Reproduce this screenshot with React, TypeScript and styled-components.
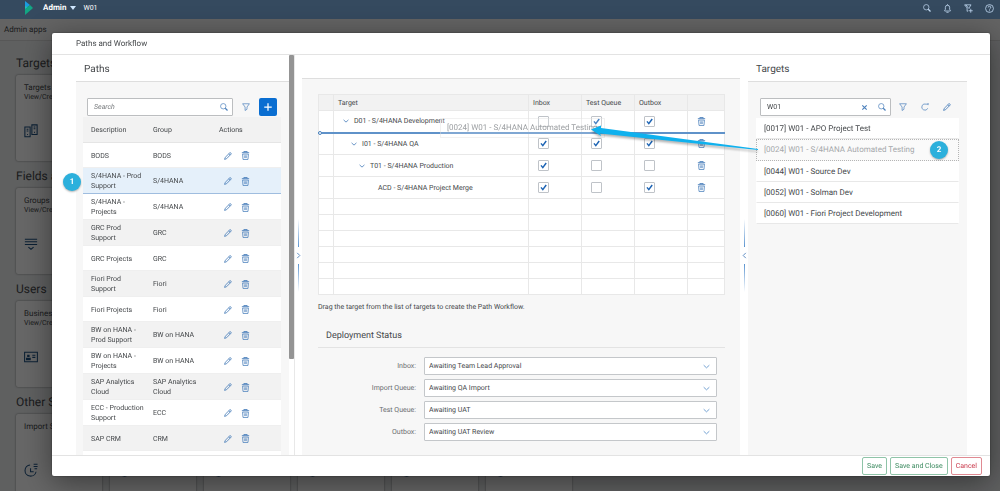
import React from 'react';
import styled, { createGlobalStyle, css } from 'styled-components';

const paths = [
  { description: 'BODS', group: 'BODS' },
  { description: 'S/4HANA - Prod Support', group: 'S/4HANA', selected: true },
  { description: 'S/4HANA - Projects', group: 'S/4HANA' },
  { description: 'GRC Prod Support', group: 'GRC' },
  { description: 'GRC Projects', group: 'GRC' },
  { description: 'Fiori Prod Support', group: 'Fiori' },
  { description: 'Fiori Projects', group: 'Fiori' },
  { description: 'BW on HANA - Prod Support', group: 'BW on HANA' },
  { description: 'BW on HANA - Projects', group: 'BW on HANA' },
  { description: 'SAP Analytics Cloud', group: 'SAP Analytics Cloud' },
  { description: 'ECC - Production Support', group: 'ECC' },
  { description: 'SAP CRM', group: 'CRM' },
];

const workflow = [
  { name: 'D01 - S/4HANA Development', level: 0, checks: [false, true, true], drop: true },
  { name: 'I01 - S/4HANA QA', level: 1, checks: [true, true, true] },
  { name: 'T01 - S/4HANA Production', level: 2, checks: [true, false, false] },
  { name: 'ACD - S/4HANA Project Merge', level: 3, checks: [true, false, true], leaf: true },
];

const queues = ['Inbox', 'Test Queue', 'Outbox'];

const statuses = [
  { id: 'inbox', label: 'Inbox:', value: 'Awaiting Team Lead Approval' },
  { id: 'import', label: 'Import Queue:', value: 'Awaiting QA Import' },
  { id: 'test', label: 'Test Queue:', value: 'Awaiting UAT' },
  { id: 'outbox', label: 'Outbox:', value: 'Awaiting UAT Review' },
];

const targets = [
  '[0017] W01 - APO Project Test',
  '[0024] W01 - S/4HANA Automated Testing',
  '[0044] W01 - Source Dev',
  '[0052] W01 - Solman Dev',
  '[0060] W01 - Fiori Project Development',
];

const sections = [
  { title: 'Targets', tile: 'Targets', sub: 'View/Create', icon: 'systems', count: 1 },
  { title: 'Fields and Groups', tile: 'Groups', sub: 'View/Create', icon: 'groups', count: 1 },
  { title: 'Users', tile: 'Business', sub: 'View/Create', icon: 'card', count: 1 },
  { title: 'Other Settings', tile: 'Import Status', sub: '', icon: 'clock', count: 6 },
];

/* ---------- icons ---------- */

const Icon = ({ name, size = 8 }: { name: string; size?: number }) => (
  <svg width={size} height={size} viewBox="0 0 16 16" fill="none" stroke="currentColor" strokeWidth="1.4" aria-hidden="true">
    {name === 'search' && <><circle cx="6.5" cy="6.5" r="5.4" /><path d="M10.5 10.5 15 15" strokeWidth="2.4" /></>}
    {name === 'filter' && <path d="M1.2 1.5h13.6L10 8v4.5L6.2 15V8z" />}
    {name === 'filterAdd' && <><path d="M9 8.5V7l3.5-5.5H1L5.5 7v6l2-1M3.5 1.5 8 7.5" /><path d="M12 8.5v7M8.5 12h7" /></>}
    {name === 'plus' && <path d="M8 2v12M2 8h12" strokeWidth="2" />}
    {name === 'close' && <path d="M3 3l10 10M13 3 3 13" strokeWidth="2.6" />}
    {name === 'refresh' && <path d="M13.5 10.5A6.2 6.2 0 1 1 10 2.3h4.2M14.2 0v4.2" />}
    {name === 'pencil' && <path d="M1.2 14.8l1.2-4L11.6 1.6q1.2-.8 2.2.4t.4 2.2L5.2 13.4zM9.8 3.4l2.8 2.8" strokeWidth="1.7" />}
    {name === 'trash' && (
      <>
        <path d="M1.500 3h13M5 2.600V1h6v1.600" strokeWidth="1.6" />
        <path d="M2.800 5.500l.8 9.500h8.800l.8-9.500z" />
        <path d="M6 7.500l.3 5M8 7.500v5M10 7.500l-.3 5" strokeWidth="1" />
      </>
    )}
    {name === 'down' && <path d="M1.500 5 8 11l6.500-6" strokeWidth="2.2" />}
    {name === 'right' && <path d="M5 2l6 6-6 6" strokeWidth="2" />}
    {name === 'left' && <path d="M11 2 5 8l6 6" strokeWidth="2" />}
    {name === 'bell' && <path d="M3 12.5V11l1.2-1.5V6a3.8 3.8 0 0 1 7.6 0v3.5L13 11v1.5zM8 2.2V.5M6 14.8h4" />}
    {name === 'help' && <><circle cx="8" cy="8" r="7" /><path d="M5.7 6.2a2.3 2.3 0 1 1 3.3 2c-.8.4-1 .8-1 1.6M8 11.3V13" /></>}
    {name === 'systems' && <><path d="M1 3.5h6v11H1zM9 1h6v11H9zM3 6h2M11 3.5h2M3 8h2M11 5.5h2" strokeWidth="1.2" /><path d="M3.5 12h1M11.5 9.5h1" /></>}
    {name === 'groups' && <path d="M1 2.5h14M1 5.5h14M1 8.5h14M5 11.5l3 2.5 3-2.5" strokeWidth="1.2" />}
    {name === 'card' && <><path d="M.7 2.5h14.6v11H.7z" strokeWidth="1.2" /><path d="M3 11V9.5h4V11zM4.3 6h1.4v1.4H4.3zM9.5 6H13M9.5 8.5H13" strokeWidth="1.4" /></>}
    {name === 'clock' && <path d="M7 2.2A6.4 6.4 0 1 0 13.8 10M7.5 6v4H11M11 1.5h4.5M11 4h4.5M12 6.5h3" strokeWidth="1.2" />}
  </svg>
);

const Logo = () => (
  <svg width="8" height="14" viewBox="0 0 8 14" aria-hidden="true">
    <path d="M0 0l5 4-5 4z" fill="#1c9be0" />
    <path d="M0 8l5-4 3 3-8 7z" fill="#12a583" />
    <path d="M0 5l2.500 1L0 8z" fill="#1fc6b6" />
  </svg>
);

const CheckBox = ({ label, checked }: { label: string; checked: boolean }) => (
  <CheckWrap>
    <CheckInput type="checkbox" aria-label={label} defaultChecked={checked} />
    <svg width="11" height="11" viewBox="0 0 11 11" fill="none" stroke="#1d64b4" strokeWidth="1.5">
      <path d="M3 5.4 4.800 7.600 8.200 3" />
    </svg>
  </CheckWrap>
);

const Splitter = ({ icon }: { icon: string }) => (
  <SplitBar>
    <SplitLine $up />
    <Icon name={icon} size={7} />
    <SplitLine />
  </SplitBar>
);

const DragArrow = () => (
  <ArrowSvg width="172" height="32" viewBox="0 0 172 32" aria-hidden="true">
    <path d="M4 7.500 14 3.500v2.500L171 27v1L13 11.500l1 2.500z" fill="#0fb1ee" />
  </ArrowSvg>
);

/* ---------- page ---------- */

const App = () => {
  return (
    <Page>
      <GlobalStyle />
      <ShellBar>
        <Logo />
        <AppMenu type="button">Admin <Caret /></AppMenu>
        <span>W01</span>
        <ShellActions>
          <IconButton aria-label="Search"><Icon name="search" /></IconButton>
          <IconButton aria-label="Notifications"><Icon name="bell" size={9} /></IconButton>
          <IconButton aria-label="Add filter"><Icon name="filterAdd" size={9} /></IconButton>
          <IconButton aria-label="Help"><Icon name="help" size={9} /></IconButton>
        </ShellActions>
      </ShellBar>
      <SubBar>Admin apps</SubBar>
      <Launchpad>
        {sections.map((s) => (
          <section key={s.title}>
            <SectionTitle>{s.title}</SectionTitle>
            <Tiles>
              {Array.from({ length: s.count }, (_, i) => (
                <Tile key={i}>
                  {i === 0 && <TileTitle>{s.tile}</TileTitle>}
                  {i === 0 && <TileSub>{s.sub}</TileSub>}
                  <TileIcon><Icon name={s.icon} size={14} /></TileIcon>
                </Tile>
              ))}
            </Tiles>
          </section>
        ))}
      </Launchpad>
      <Backdrop />

      <Dialog role="dialog" aria-label="Paths and Workflow">
        <DialogHeader>Paths and Workflow</DialogHeader>
        <DialogBody>
          <PathsPane>
            <PaneTitle>Paths</PaneTitle>
            <PathsContent>
              <Toolbar>
                <SearchBox>
                  <SearchInput aria-label="Search paths" placeholder="Search" />
                  <IconButton aria-label="Search"><Icon name="search" /></IconButton>
                </SearchBox>
                <IconButton $wide aria-label="Filter"><Icon name="filter" /></IconButton>
                <AddButton aria-label="Add path"><Icon name="plus" size={10} /></AddButton>
              </Toolbar>
              <PathTable>
                <thead>
                  <tr><th>Description</th><th>Group</th><th>Actions</th></tr>
                </thead>
                <tbody>
                  {paths.map((p) => (
                    <PathRow key={p.description} $selected={p.selected}>
                      <td>{p.description}</td>
                      <td>{p.group}</td>
                      <td>
                        <RowActions>
                          <IconButton aria-label={`Edit ${p.description}`}><Icon name="pencil" /></IconButton>
                          <IconButton aria-label={`Delete ${p.description}`}><Icon name="trash" size={9} /></IconButton>
                        </RowActions>
                        {p.selected && <RowBadge>1</RowBadge>}
                      </td>
                    </PathRow>
                  ))}
                  <PathRow><td /><td /><td /></PathRow>
                </tbody>
              </PathTable>
            </PathsContent>
          </PathsPane>
          <ScrollTrack><ScrollThumb /></ScrollTrack>
          <Splitter icon="right" />

          <WorkflowPane>
            <PaneTitle />
            <WorkflowContent>
              <TableWrap>
                <WorkflowTable>
                  <colgroup>
                    <Col $w={15} /><col /><Col $w={53} /><Col $w={53} /><Col $w={53} /><Col $w={37} />
                  </colgroup>
                  <thead>
                    <tr>
                      <th /><th>Target</th>
                      {queues.map((q) => <th key={q}>{q}</th>)}
                      <th />
                    </tr>
                  </thead>
                  <tbody>
                    {workflow.map((w) => (
                      <WorkflowRow key={w.name} $drop={w.drop}>
                        <td />
                        <td>
                          <TreeNode $level={w.level} $leaf={w.leaf}>
                            {!w.leaf && <IconButton aria-label={`Collapse ${w.name}`}><Icon name="down" size={6} /></IconButton>}
                            <span>{w.name}</span>
                          </TreeNode>
                        </td>
                        {w.checks.map((c, i) => (
                          <td key={queues[i]}><CheckBox label={`${w.name} ${queues[i]}`} checked={c} /></td>
                        ))}
                        <td><IconButton aria-label={`Delete ${w.name}`}><Icon name="trash" size={9} /></IconButton></td>
                      </WorkflowRow>
                    ))}
                    {[0, 1, 2, 3, 4, 5].map((n) => (
                      <EmptyRow key={n}><td /><td /><td /><td /><td /><td /></EmptyRow>
                    ))}
                  </tbody>
                </WorkflowTable>
                <DropDot />
                <DragGhost>[0024] W01 - S/4HANA Automated Testing</DragGhost>
              </TableWrap>
              <Hint>Drag the target from the list of targets to create the Path Workflow.</Hint>
              <FormTitle>Deployment Status</FormTitle>
              <Form>
                {statuses.map((s) => (
                  <FormRow key={s.id}>
                    <label htmlFor={s.id}>{s.label}</label>
                    <SelectWrap>
                      <Select id={s.id} defaultValue={s.value}><option>{s.value}</option></Select>
                      <Icon name="down" size={7} />
                    </SelectWrap>
                  </FormRow>
                ))}
              </Form>
            </WorkflowContent>
          </WorkflowPane>
          <Splitter icon="left" />

          <TargetsPane>
            <PaneTitle>Targets</PaneTitle>
            <TargetsContent>
              <Toolbar>
                <SearchBox>
                  <SearchInput aria-label="Search targets" defaultValue="W01" />
                  <IconButton aria-label="Clear"><Icon name="close" size={7} /></IconButton>
                  <IconButton aria-label="Search"><Icon name="search" /></IconButton>
                </SearchBox>
                <TargetActions>
                  <IconButton aria-label="Filter"><Icon name="filter" /></IconButton>
                  <IconButton aria-label="Refresh"><Icon name="refresh" /></IconButton>
                  <IconButton aria-label="Edit"><Icon name="pencil" /></IconButton>
                </TargetActions>
              </Toolbar>
              <TargetList>
                {targets.map((t, i) => (
                  <TargetItem key={t} $dragging={i === 1}>
                    {t}
                    {i === 1 && <TargetBadge>2</TargetBadge>}
                    {i === 1 && <DragArrow />}
                  </TargetItem>
                ))}
              </TargetList>
            </TargetsContent>
          </TargetsPane>
        </DialogBody>
        <DialogFooter>
          <FooterButton>Save</FooterButton>
          <FooterButton>Save and Close</FooterButton>
          <FooterButton $danger>Cancel</FooterButton>
        </DialogFooter>
      </Dialog>
    </Page>
  );
};

export default App;

const GlobalStyle = createGlobalStyle`
* { box-sizing:border-box; }
body {
  margin:0;
  background:#edeff0;
  color:#45484b;
  font-family:Roboto, "Liberation Sans", sans-serif;
  font-size:7px;
  line-height:10px;
  text-rendering:geometricPrecision;
}
button, input, select { font:inherit; color:inherit; text-rendering:inherit; }
table { border-collapse:collapse; table-layout:fixed; }
th { font-weight:400; text-align:left; }
td, th { padding:0; }
`

const Page = styled.div`
height:100vh;
overflow:hidden;
display:flex;
flex-direction:column;
`

const ShellBar = styled.header`
flex:none;
height:19px;
padding:0 6px 3px 25px;
display:flex;
align-items:center;
background:#354a5f;
color:white;
position:relative;
z-index:2;
`

const AppMenu = styled.button`
border:none;
background:none;
padding:0;
margin:0 7px 0 10px;
display:flex;
align-items:center;
gap:4px;
font-size:8px;
font-weight:700;
cursor:pointer;
`

const Caret = styled.i`
border:3px solid transparent;
border-top:4px solid #d1e8ff;
border-bottom:none;
`

const IconButton = styled.button<{ $wide?: boolean }>`
border:none;
background:none;
padding:0;
width:${p => (p.$wide ? '26px' : '9px')};
flex:none;
display:flex;
align-items:center;
justify-content:center;
color:#4a7fbb;
cursor:pointer;
`

const ShellActions = styled.div`
margin-left:auto;
display:flex;
gap:12px;
${IconButton}{
  color:#c5ddf5;
}
`

const SubBar = styled.div`
flex:none;
height:22px;
padding:0 4px;
display:flex;
align-items:center;
font-size:8px;
background:#f7f7f7;
border-bottom:1px solid #d9d9d9;
`

const Launchpad = styled.main`
flex:1;
min-height:0;
padding:12px 16px 0;
overflow:hidden;
`

const SectionTitle = styled.h2`
margin:0;
height:22px;
line-height:20px;
font-size:12px;
font-weight:400;
`

const Tiles = styled.div`
display:flex;
gap:8px;
margin-bottom:5px;
`

const Tile = styled.div`
width:86px;
height:86px;
padding:8px 8px 5px;
display:flex;
flex-direction:column;
background:white;
border-radius:2px;
box-shadow:0 0 2px rgba(0, 0, 0, 0.5);
`

const TileTitle = styled.div`
font-size:8px;
line-height:10px;
`

const TileSub = styled.div`
line-height:8px;
`

const TileIcon = styled.div`
margin-top:auto;
height:32px;
color:#1d4f80;
`

const Backdrop = styled.div`
position:fixed;
inset:19px 0 0;
background:rgba(0, 0, 0, 0.6);
z-index:1;
`

const Dialog = styled.div`
position:fixed;
inset:33px 10px 15px 52px;
z-index:3;
display:flex;
flex-direction:column;
background:white;
border-radius:2px;
box-shadow:0 6px 30px rgba(0, 0, 0, 0.45), 0 0 2px rgba(0, 0, 0, 0.5);
`

const DialogHeader = styled.h1`
margin:0;
flex:none;
height:22px;
padding:0 24px;
display:flex;
align-items:center;
font-size:8px;
font-weight:400;
border-bottom:1px solid #e3e3e3;
`

const DialogBody = styled.div`
flex:1;
min-height:0;
display:flex;
padding:0 23px 0 24px;
`

const pane = css`
display:flex;
flex-direction:column;
background:#f7f7f7;
`

const PathsPane = styled.section`
${pane}
flex:none;
width:213px;
`

const WorkflowPane = styled.section`
${pane}
flex:1;
min-width:0;
> h2{
  height:24px;
}
`

const TargetsPane = styled.section`
${pane}
flex:none;
width:219px;
`

const PaneTitle = styled.h2`
margin:0;
flex:none;
height:27px;
padding:4px 8px 0;
display:flex;
align-items:center;
font-size:10px;
font-weight:400;
background:white;
border-bottom:1px solid #dedede;
`

/* open on the left so that the row badge can hang out */
const PathsContent = styled.div`
flex:1;
min-height:0;
padding:16px 8px 0 7px;
clip-path:inset(0 0 0 -30px);
`

const Toolbar = styled.div`
display:flex;
align-items:center;
padding:0 4px;
`

const SearchBox = styled.div`
flex:1;
min-width:0;
height:18px;
padding:0 4px 0 6px;
display:flex;
align-items:center;
gap:8px;
background:white;
border:1px solid #bcbec0;
border-radius:1px;
`

const SearchInput = styled.input`
flex:1;
min-width:0;
border:none;
padding:0;
background:none;
outline:none;
&::placeholder{
  color:#74777a;
  font-style:italic;
}
`

const AddButton = styled.button`
width:18px;
height:18px;
padding:0;
border:none;
border-radius:2px;
display:flex;
align-items:center;
justify-content:center;
background:#0a6ed1;
color:white;
cursor:pointer;
`

const PathTable = styled.table`
width:100%;
margin-top:1px;
th{
  height:26px;
  padding-left:8px;
  background:#f2f2f2;
  box-shadow:inset 0 -1px #e5e5e5;
}
td{
  height:25px;
  padding:3px 0 3px 8px;
}
th:nth-child(1){
  width:62px;
}
th:nth-child(2){
  width:66px;
}
`

const PathRow = styled.tr<{ $selected?: boolean }>`
position:relative;
background:white;
&:nth-child(even){
  background:${p => (p.$selected ? '#e5f0fa' : '#f2f2f2')};
}
td{
  box-shadow:inset 0 -1px ${p => (p.$selected ? '#9fbddf' : '#efefef')};
}
`

const RowActions = styled.div`
display:flex;
gap:9px;
padding-left:4px;
`

const Badge = styled.span`
position:absolute;
width:18px;
height:18px;
border-radius:50%;
display:flex;
align-items:center;
justify-content:center;
background:#2cb0dc;
color:white;
font-size:8px;
font-weight:700;
box-shadow:0 1px 2px rgba(0, 0, 0, 0.3);
`

const RowBadge = styled(Badge)`
left:-20px;
top:5px;
`

const ScrollTrack = styled.div`
flex:none;
width:5px;
box-shadow:1px 0 #e8e8e8;
`

const ScrollThumb = styled.div`
height:76%;
background:#949494;
border-radius:1px;
`

const SplitBar = styled.div`
flex:none;
width:8px;
display:flex;
flex-direction:column;
align-items:center;
justify-content:center;
gap:5px;
color:#4a7fbb;
`

const SplitLine = styled.div<{ $up?: boolean }>`
width:1px;
height:28px;
background:linear-gradient(${p => (p.$up ? 'to top' : 'to bottom')}, #5b94d0, white);
`

const WorkflowContent = styled.div`
padding:15px 15px 0 16px;
`

const TableWrap = styled.div`
position:relative;
`

const Col = styled.col<{ $w: number }>`
width:${p => p.$w}px;
`

const WorkflowTable = styled.table`
width:100%;
background:white;
th, td{
  border:1px solid #e8e8e8;
  padding:0 4px;
}
th{
  height:16px;
  background:#f2f2f2;
}
td:nth-child(n+3){
  padding-left:9px;
}
`

const WorkflowRow = styled.tr<{ $drop?: boolean }>`
height:22px;
td{
  ${p => p.$drop && 'border-bottom:2px solid #5f92c9;'}
}
`

const EmptyRow = styled.tr`
height:16px;
`

const TreeNode = styled.div<{ $level: number; $leaf?: boolean }>`
display:flex;
align-items:center;
gap:4px;
padding-left:${p => 3 + p.$level * 8 + (p.$leaf ? 13 : 0)}px;
`

const CheckWrap = styled.span`
display:grid;
width:11px;
height:11px;
> *{
  grid-area:1 / 1;
}
svg{
  pointer-events:none;
}
input:not(:checked) + svg{
  display:none;
}
`

const CheckInput = styled.input`
appearance:none;
margin:0;
width:11px;
height:11px;
border:1px solid #bfc3c8;
border-radius:1px;
background:white;
`

const DropDot = styled.i`
position:absolute;
left:0;
top:37px;
width:4px;
height:4px;
border:1px solid #4a82bd;
border-radius:50%;
background:white;
`

const DragGhost = styled.div`
position:absolute;
left:122px;
top:24px;
height:20px;
padding:0 6px;
display:flex;
align-items:center;
white-space:nowrap;
font-size:8px;
color:#9da0a3;
background:rgba(255, 255, 255, 0.2);
border:1px solid rgba(220, 220, 220, 0.4);
`

const Hint = styled.p`
margin:7px 0 0;
`

const FormTitle = styled.h3`
margin:13px 0 0;
height:23px;
padding:0 8px;
display:flex;
align-items:center;
font-size:9px;
font-weight:400;
border-bottom:1px solid #e3e3e3;
`

const Form = styled.form`
padding:9px 8px 0 0;
display:flex;
flex-direction:column;
gap:4px;
`

const FormRow = styled.div`
display:flex;
align-items:center;
gap:8px;
> label{
  width:98px;
  text-align:right;
  color:#6a6d70;
}
`

const SelectWrap = styled.div`
flex:1;
display:grid;
align-items:center;
> *{
  grid-area:1 / 1;
}
svg{
  justify-self:end;
  margin-right:7px;
  color:#6f9fd0;
  pointer-events:none;
}
`

const Select = styled.select`
appearance:none;
width:100%;
height:18px;
padding:0 4px;
border:1px solid #c4c7ca;
border-radius:1px;
background:white;
`

const TargetsContent = styled.div`
padding:16px 8px 0;
`

const TargetActions = styled.div`
display:flex;
gap:13px;
padding:0 4px 0 7px;
`

const TargetList = styled.ul`
margin:2px 0 0;
padding:0;
list-style:none;
font-size:8px;
`

const TargetItem = styled.li<{ $dragging?: boolean }>`
position:relative;
height:${p => (p.$dragging ? '22px' : '21px')};
padding:0 7px;
display:flex;
align-items:center;
background:white;
border:1px solid transparent;
border-bottom-color:#e8e8e8;
${p => p.$dragging && css`
  color:#a5a8ab;
  background:#fafafa;
  border:1px dotted #b5b5b5;
`}
`

const TargetBadge = styled(Badge)`
right:10px;
top:1px;
`

const ArrowSvg = styled.svg`
position:absolute;
right:199px;
top:-18px;
filter:drop-shadow(0 2px 1px rgba(0, 0, 0, 0.3));
pointer-events:none;
`

const DialogFooter = styled.footer`
flex:none;
height:21px;
padding:0 8px;
display:flex;
align-items:center;
justify-content:flex-end;
gap:3px;
border-top:1px solid #e3e3e3;
`

const FooterButton = styled.button<{ $danger?: boolean }>`
height:18px;
padding:0 4px;
background:white;
color:${p => (p.$danger ? '#c8384a' : '#3b8a5f')};
border:1px solid ${p => (p.$danger ? '#e08a92' : '#8fc4a8')};
border-radius:2px;
cursor:pointer;
`
